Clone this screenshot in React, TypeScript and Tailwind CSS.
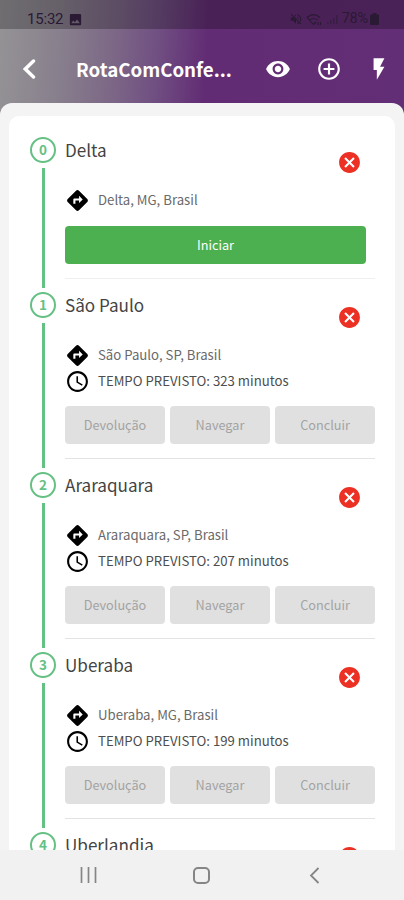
import {
  MdAccessTime,
  MdCancel,
  MdControlPoint,
  MdDirections,
  MdFlashOn,
  MdImage,
  MdVisibility,
  MdVolumeOff,
} from 'react-icons/md';

type Stop = {
  name: string;
  address: string;
  minutes?: number;
};

const stops: Stop[] = [
  { name: 'Delta', address: 'Delta, MG, Brasil' },
  { name: 'São Paulo', address: 'São Paulo, SP, Brasil', minutes: 323 },
  { name: 'Araraquara', address: 'Araraquara, SP, Brasil', minutes: 207 },
  { name: 'Uberaba', address: 'Uberaba, MG, Brasil', minutes: 199 },
];

const actions = ['Devolução', 'Navegar', 'Concluir'];

function StatusBar() {
  return (
    <div className="flex h-[29px] items-center justify-between bg-black/25 pt-[9px] pr-[25px] pl-[27px] font-['Roboto',sans-serif] text-[#2b1a33]">
      <div className="flex items-center gap-[5px]">
        <span className="text-[15px] leading-5 tracking-[-0.2px]">15:32</span>
        <MdImage className="size-[15px]" />
      </div>
      <div className="flex items-center">
        <MdVolumeOff className="mr-[3px] size-[14px]" />
        <svg className="mr-1 h-[13px] w-[16px]" viewBox="0 0 16 13" fill="none" stroke="currentColor" strokeWidth="1.1">
          <path d="M1 4.500C5 1 10 1 14 4.500M3.500 7C6.200 5 9 5 11.500 7M7.500 11.500L1 4.500M7.500 11.500L10 9M12 9v3M14.500 9v3" />
        </svg>
        <svg className="mr-[4px] h-[11px] w-[12px]" viewBox="0 0 12 11" fill="currentColor" opacity="0.5">
          <path d="M1 8h1.500v2H1zM4 6h1.500v4H4zM7 4h1.500v6H7zM10 1h1.500v9H10z" />
        </svg>
        <span className="text-[14.500px] leading-5 tracking-[-0.2px]">78%</span>
        <svg className="ml-0.5 h-[12px] w-[9px]" viewBox="0 0 9 12" fill="currentColor">
          <path d="M2.500 0h4v1.500H8a1 1 0 0 1 1 1V11a1 1 0 0 1-1 1H1a1 1 0 0 1-1-1V2.500a1 1 0 0 1 1-1h1.500z" />
        </svg>
      </div>
    </div>
  );
}

function Header() {
  return (
    <div className="flex h-[74px] items-center pt-[6px] pl-[23px] text-white">
      <svg className="h-[20px] w-[13px]" viewBox="0 0 13 20" fill="none" stroke="currentColor" strokeWidth="3.400" strokeLinecap="round">
        <path d="M10.500 2L2.300 10L10.500 18" />
      </svg>
      <h1 className="ml-[40px] w-[160px] text-[18.700px] leading-7 font-bold whitespace-nowrap">RotaComConfe...</h1>
      <MdVisibility className="ml-[29px] size-[26px]" />
      <MdControlPoint className="ml-[25px] size-[26px]" />
      <MdFlashOn className="ml-6 size-[26px]" />
    </div>
  );
}

function StopHeading({ name }: { name: string }) {
  return (
    <div className="flex h-[51px] justify-between pr-[13px]">
      <h2 className="text-[17.100px] leading-[25px] text-[#444444]">{name}</h2>
      <MdCancel className="mt-[13px] size-[25px] text-[#ed3024]" />
    </div>
  );
}

function StopNumber({ value }: { value: number }) {
  return (
    <div className="flex size-[26px] shrink-0 items-center justify-center rounded-full border-2 border-[#65c084] pb-px text-[13.500px] leading-none font-bold text-[#65c084]">
      {value}
    </div>
  );
}

function StopRow({ stop, index }: { stop: Stop; index: number }) {
  const isStart = stop.minutes === undefined;

  return (
    <div className={`flex shrink-0 ${isStart ? 'h-[155px]' : 'h-[180px]'}`}>
      <div className="flex w-[26px] flex-col items-center">
        <StopNumber value={index} />
        <div className="mt-[5px] mb-1 w-[3px] flex-1 bg-[#65c084]" />
      </div>

      <div className="ml-[9px] w-[310px]">
        <StopHeading name={stop.name} />
        <div className="flex h-6 items-center">
          <MdDirections className="size-[25px] text-black" />
          <span className="ml-[8px] text-[13.200px] leading-6 text-[#6a6a6a]">{stop.address}</span>
        </div>
        {!isStart && (
          <div className="mt-[2px] flex h-6 items-center">
            <MdAccessTime className="size-[25px] text-black" />
            <span className="ml-[8px] text-[13.200px] leading-6 text-[#4d4d4d]">
              TEMPO PREVISTO: {stop.minutes} minutos
            </span>
          </div>
        )}
        {isStart ? (
          <button className="mt-[14px] block h-[38px] w-[301px] rounded-[4px] bg-[#4caf50] pb-px text-[12.700px] text-white">
            Iniciar
          </button>
        ) : (
          <div className="mt-[13px] flex gap-[5px]">
            {actions.map((action) => (
              <button key={action} className="h-[38px] flex-1 rounded-[4px] bg-[#e0e0e0] pb-px text-[12.700px] text-[#a3a3a3]">
                {action}
              </button>
            ))}
          </div>
        )}
        <div className={`mt-[14px] h-px ${isStart ? 'bg-[#efefef]' : 'bg-[#e3e3e3]'}`} />
      </div>
    </div>
  );
}

function NavigationBar() {
  return (
    <div className="flex h-[50px] shrink-0 items-center bg-[#f1f1f1] pl-[80px] text-[#858585]">
      <svg className="h-[18px] w-[17px]" viewBox="0 0 17 18" fill="none" stroke="currentColor" strokeWidth="1.700">
        <path d="M1.500 1v16M8.500 1v16M15.500 1v16" />
      </svg>
      <div className="ml-[96px] size-[17px] rounded-[5px] border-2 border-current" />
      <svg className="ml-[99px] h-[17px] w-[11px]" viewBox="0 0 11 17" fill="none" stroke="currentColor" strokeWidth="1.800">
        <path d="M9.500 1L2 8.500L9.500 16" />
      </svg>
    </div>
  );
}

export default function App() {
  return (
    <div className="flex h-[900px] w-[404px] flex-col overflow-hidden bg-[#f4f4f4] font-['Noto_Sans_CJK_JP',sans-serif]">
      {/* runs 12px below the header so the sheet's rounded corners sit on it */}
      <div className="-mb-3 shrink-0 bg-[linear-gradient(94deg,#959396_0%,#88808d_15%,#7c6686_29%,#704f82_39%,#622c74_51%,#622e75_100%)] pb-3">
        <StatusBar />
        <Header />
      </div>
      <div className="relative min-h-0 flex-1 overflow-hidden rounded-t-[12px] bg-[#f4f4f4] px-[9px] pt-[13px]">
        <div className="flex h-full flex-col overflow-hidden rounded-t-[10px] bg-white pt-[21px] pl-[21px]">
          {stops.map((stop, index) => (
            <StopRow key={stop.name} stop={stop} index={index} />
          ))}
          {/* next stop, only its top edge is scrolled into view */}
          <div className="flex shrink-0">
            <StopNumber value={4} />
            <div className="ml-[9px] w-[310px]">
              <StopHeading name="Uberlandia" />
            </div>
          </div>
        </div>
      </div>
      <NavigationBar />
    </div>
  );
}
